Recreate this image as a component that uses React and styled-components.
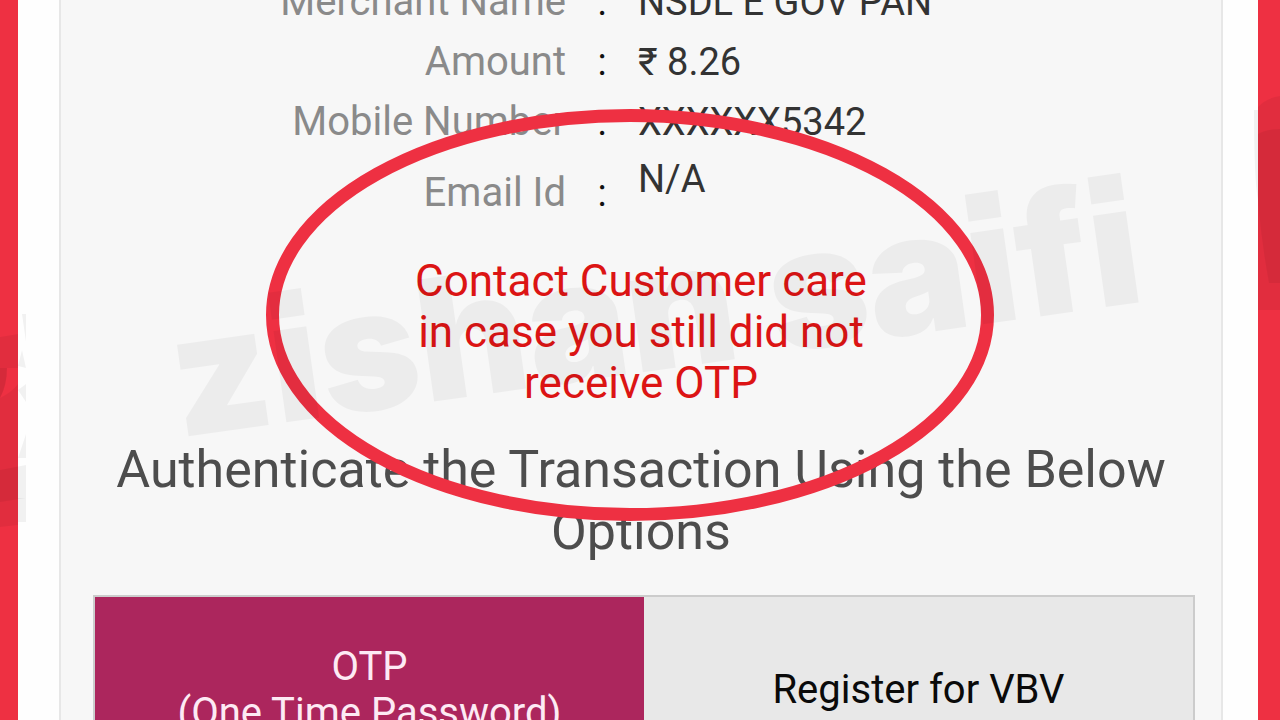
import React from "react";
import styled, { createGlobalStyle, css } from "styled-components";

const GlobalStyle = createGlobalStyle`
  *, *::before, *::after { box-sizing: border-box; }
  body { margin: 0; background: #ee3042; font-family: Roboto, "Liberation Sans", sans-serif; }
`;

const Frame = styled.div`
  position: relative;
  height: 100vh;
  overflow: hidden;
  padding: 0 22px 0 18px;
  background: #ee3042;
`;

const Page = styled.main`
  min-height: 100%;
  padding: 0 35px 0 41px;
  background: #fefefe;
`;

const Card = styled.section`
  min-height: 100vh;
  border: solid #e7e7e7;
  border-width: 0 2px;
  background: #f7f7f7;
  color: #4d4d4d;
  text-align: center;
`;

const Details = styled.dl`
  margin: -28px 0 0;
  padding-right: 78px;
`;

const Row = styled.div`
  display: grid;
  grid-template-columns: 1fr 72px 1fr;
  align-items: ${(p) => (p.$tall ? "center" : "baseline")};
  height: ${(p) => (p.$tall ? 82 : 60)}px;
  line-height: ${(p) => (p.$tall ? 54 : 60)}px;
`;

const Label = styled.dt`
  color: #8a8a8a;
  font-size: 40px;
  text-align: right;
`;

const Colon = styled.span`
  color: #111;
  font-size: 38px;
`;

const Value = styled.dd`
  margin: 0;
  align-self: ${(p) => (p.$top ? "start" : "auto")};
  color: #333;
  font-size: 38px;
  text-align: left;
`;

const Notice = styled.p`
  max-width: 460px;
  margin: 22px auto 0;
  color: #dc1414;
  font-size: 44px;
  line-height: 51px;
`;

const Heading = styled.h2`
  margin: 30px 32px 0;
  font-size: 52px;
  font-weight: 400;
  line-height: 62px;
`;

const Tabs = styled.div`
  display: grid;
  grid-template-columns: 1fr 1fr;
  margin: 32px 26px 0 32px;
  border: 2px solid #ccc;
`;

const Tab = styled.button`
  height: 186px;
  padding: 0;
  border: 0;
  background: #e8e8e8;
  color: #0a0a0a;
  font: 400 40px/46px Roboto, "Liberation Sans", sans-serif;
  ${(p) =>
    p.$active &&
    css`
      background: #ac265d;
      color: #fdeaf4;
    `}
`;

const Ring = styled.svg`
  position: absolute;
  top: 109px;
  left: calc(50% - 374px);
  width: 728px;
  height: 412px;
`;

const Watermark = styled.div`
  position: absolute;
  top: 219px;
  left: calc(50% - 474px);
  color: rgba(0, 0, 0, 0.045);
  font: 900 169px/180px Inter, sans-serif;
  font-feature-settings: "ss07";
  white-space: nowrap;
  transform: rotate(-8deg);
  pointer-events: none;
`;

const EdgeMark = styled.svg`
  position: absolute;
  top: ${(p) => p.$top}px;
  ${(p) => p.$side}: 0;
  width: 26px;
  height: 220px;
  fill: rgba(0, 0, 0, 0.05);
`;

const rows = [
  { label: "Merchant Name", value: "NSDL E GOV PAN" },
  { label: "Amount", value: "₹ 8.26" },
  { label: "Mobile Number", value: "XXXXXX5342" },
  { label: "Email Id", value: "N/A", tall: true },
];

export default function App() {
  return (
    <Frame>
      <GlobalStyle />
      <Page>
        <Card>
          <Details>
            {rows.map((r) => (
              <Row key={r.label} $tall={r.tall}>
                <Label>{r.label}</Label>
                <Colon>:</Colon>
                <Value $top={r.tall}>{r.value}</Value>
              </Row>
            ))}
          </Details>
          <Notice>Contact Customer care in case you still did not receive OTP</Notice>
          <Heading>Authenticate the Transaction Using the Below Options</Heading>
          <Tabs>
            <Tab type="button" $active>
              OTP
              <br />
              (One Time Password)
            </Tab>
            <Tab type="button">Register for VBV</Tab>
          </Tabs>
        </Card>
      </Page>
      <Ring viewBox="0 0 728 412" aria-hidden="true">
        <ellipse cx="364" cy="206" rx="357.5" ry="199.5" fill="none" stroke="#ee3042" strokeWidth="13" />
      </Ring>
      <EdgeMark $side="left" $top={310} viewBox="0 0 26 220" aria-hidden="true">
        <path d="M0 27L18 24V58H7Q7 74 0 88Z" />
        <path d="M7 58H0V88Q7 76 7 58ZM0 88Q12 82 18 74V215L0 217Z" />
        <path d="M0 160L26 155V188L0 192Z" />
        <path d="M22 4H26V32ZM18 56L22 40L26 58ZM18 80L26 74V92ZM18 148L26 124V148ZM18 188H26V212H18Z" />
      </EdgeMark>
      <EdgeMark $side="right" $top={90} viewBox="0 0 26 220" aria-hidden="true">
        <path d="M4 17Q12 8 26 6V220H4Z" />
        <path d="M4 44Q12 39 26 39V193H15Q7 150 4 110Z" />
        <path d="M0 20H4V110Q0 90 0 20Z" />
      </EdgeMark>
      <Watermark aria-hidden="true">zishan saifi</Watermark>
    </Frame>
  );
}
